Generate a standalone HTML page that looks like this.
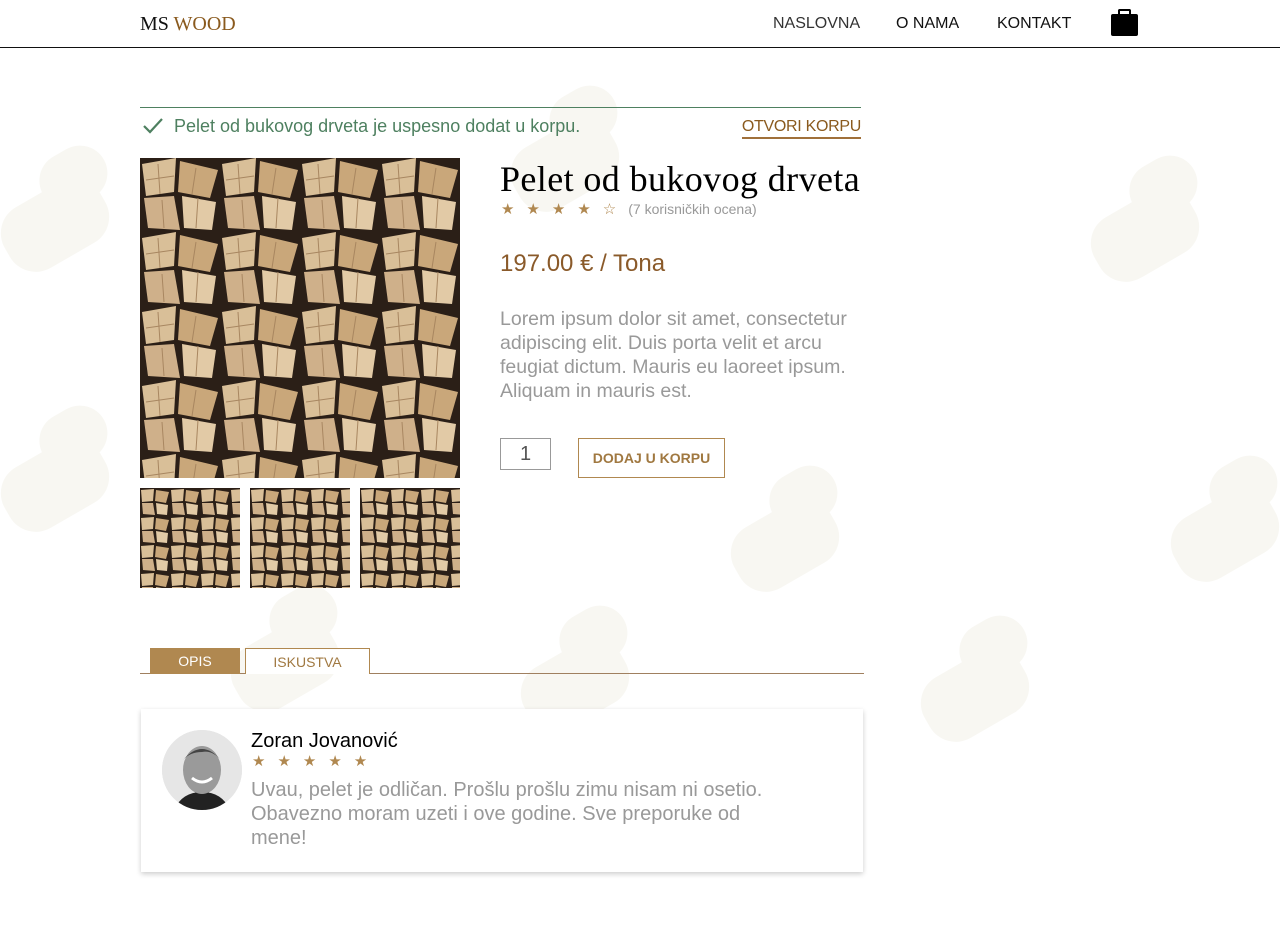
<!DOCTYPE html>
<html><head><meta charset="utf-8">
<style>
*{margin:0;padding:0;box-sizing:border-box}
body{width:1280px;height:950px;background:#fff;font-family:"Liberation Sans",sans-serif;position:relative;overflow:hidden}
.log{position:absolute;width:110px;height:70px;background:#f8f7f2;border-radius:30px;transform:rotate(-30deg)}
.log:after{content:"";position:absolute;left:60px;top:-25px;width:70px;height:55px;background:#f8f7f2;border-radius:28px}
header{position:absolute;left:0;top:0;width:1280px;height:48px;border-bottom:1.5px solid #111;background:#fff}
.logo{position:absolute;left:140px;top:13px;font-family:"Liberation Serif",serif;font-size:20px;color:#111}
.logo span{color:#8a5a1e}
nav a{position:absolute;top:15px;font-size:16px;color:#111;text-decoration:none}
.bag{position:absolute;left:1111px;top:14px;width:27px;height:22px;background:#000;border-radius:2px}
.bag:before{content:"";position:absolute;left:7px;top:-5px;width:9px;height:6px;border:2.5px solid #000;border-bottom:none;border-radius:2px 2px 0 0}
.msg{position:absolute;left:140px;top:107px;width:721px;border-top:1px solid #4e8060}
.msg .t{position:absolute;left:34px;top:8px;font-size:18px;color:#4e8060}
.msg .ck{position:absolute;left:2px;top:8px}
.msg .o{position:absolute;right:0;top:10px;font-size:16px;color:#8a5a1e;border-bottom:2px solid #a0703a;padding-bottom:1px;letter-spacing:-0.3px}
.wood{position:absolute;background:#2a1e16}
h1{position:absolute;left:500px;top:158px;font-family:"Liberation Serif",serif;font-weight:normal;font-size:36px;letter-spacing:0.4px;color:#000}
.stars{position:absolute;color:#b08850;font-size:15px;letter-spacing:12px}
.rc{font-size:14px;color:#999;letter-spacing:0}
.price{position:absolute;left:500px;top:250px;font-size:24px;color:#8a5a2a}
.desc{position:absolute;left:500px;top:307px;width:370px;font-size:19.5px;line-height:24px;color:#999}
.qty{position:absolute;left:500px;top:438px;width:51px;height:32px;border:1px solid #999;font-size:20px;color:#555;text-align:center;line-height:30px}
.add{position:absolute;left:578px;top:438px;width:147px;height:40px;border:1px solid #b08850;color:#a07840;font-size:14px;font-weight:bold;text-align:center;line-height:38px}
.tabs{position:absolute;left:140px;top:673px;width:724px;border-top:1px solid #a08060}
.tab1{position:absolute;left:150px;top:648px;width:90px;height:26px;background:#b08850;color:#fff;font-size:14px;text-align:center;line-height:26px}
.tab2{position:absolute;left:245px;top:648px;width:125px;height:26px;background:#fff;border:1px solid #b08850;border-bottom:none;color:#a07840;font-size:14px;text-align:center;line-height:26px}
.card{position:absolute;left:141px;top:709px;width:722px;height:163px;background:#fff;box-shadow:0 2px 5px rgba(0,0,0,.2)}
.av{position:absolute;left:21px;top:21px;width:80px;height:80px;border-radius:50%;background:#e5e5e5;overflow:hidden}
.nm{position:absolute;left:110px;top:21px;font-size:20px;color:#000}
.rv{position:absolute;left:110px;top:69px;width:530px;font-size:20px;line-height:24px;color:#999}
</style></head><body>
<div class="log" style="left:0;top:190px"></div>
<div class="log" style="left:1090px;top:200px"></div>
<div class="log" style="left:0;top:450px"></div>
<div class="log" style="left:730px;top:510px"></div>
<div class="log" style="left:1170px;top:500px"></div>
<div class="log" style="left:520px;top:650px"></div>
<div class="log" style="left:920px;top:660px"></div>
<div class="log" style="left:230px;top:630px"></div>
<div class="log" style="left:510px;top:130px"></div>

<svg width="0" height="0" style="position:absolute"><defs>
<pattern id="w" width="80" height="74" patternUnits="userSpaceOnUse">
<rect width="80" height="74" fill="#2b1f17"/>
<path d="M2 6 L36 0 L34 34 L6 38Z" fill="#d9bf98"/>
<path d="M40 3 L78 12 L70 40 L38 34Z" fill="#c9a77a"/>
<path d="M4 40 L34 38 L40 72 L8 70Z" fill="#cfb08a"/>
<path d="M42 38 L76 44 L72 72 L44 70Z" fill="#e2caa6"/>
<path d="M18 6 L20 36 M6 22 L34 18 M56 10 L52 36 M22 42 L24 70 M58 40 L56 70" stroke="#a88660" stroke-width="1" fill="none"/>
</pattern>
<pattern id="w2" width="30" height="28" patternUnits="userSpaceOnUse">
<rect width="30" height="28" fill="#2b1f17"/>
<path d="M1 2 L14 1 L13 13 L2 14Z" fill="#d9bf98"/>
<path d="M16 2 L29 4 L26 15 L15 13Z" fill="#c9a77a"/>
<path d="M2 15 L13 15 L15 27 L3 26Z" fill="#cfb08a"/>
<path d="M16 15 L28 17 L27 27 L17 26Z" fill="#e2caa6"/>
</pattern></defs></svg>

<header>
<div class="logo">MS <span>WOOD</span></div>
<nav><a style="left:773px;color:#333">NASLOVNA</a><a style="left:896px">O NAMA</a><a style="left:997px">KONTAKT</a></nav>
<div class="bag"></div>
</header>

<div class="msg">
<svg class="ck" width="22" height="20" viewBox="0 0 22 20"><path d="M2 10 L8 16 L20 3" fill="none" stroke="#4e8060" stroke-width="2.2"/></svg>
<div class="t">Pelet od bukovog drveta je uspesno dodat u korpu.</div>
<div class="o">OTVORI KORPU</div>
</div>

<svg class="wood" style="left:140px;top:158px" width="320" height="320"><rect width="320" height="320" fill="url(#w)"/></svg>
<svg class="wood" style="left:140px;top:488px" width="100" height="100"><rect width="100" height="100" fill="url(#w2)"/></svg>
<svg class="wood" style="left:250px;top:488px" width="100" height="100"><rect width="100" height="100" fill="url(#w2)"/></svg>
<svg class="wood" style="left:360px;top:488px" width="100" height="100"><rect width="100" height="100" fill="url(#w2)"/></svg>

<h1>Pelet od bukovog drveta</h1>
<div class="stars" style="left:501px;top:200px">★★★★☆<span class="rc">(7 korisničkih ocena)</span></div>
<div class="price">197.00 € / Tona</div>
<div class="desc">Lorem ipsum dolor sit amet, consectetur adipiscing elit. Duis porta velit et arcu feugiat dictum. Mauris eu laoreet ipsum. Aliquam in mauris est.</div>
<div class="qty">1</div>
<div class="add">DODAJ U KORPU</div>

<div class="tabs"></div>
<div class="tab1">OPIS</div>
<div class="tab2">ISKUSTVA</div>

<div class="card">
<div class="av"><svg width="80" height="80"><rect width="80" height="80" fill="#e6e6e6"/><path d="M12 80 Q20 62 40 62 Q60 62 68 80Z" fill="#222"/><ellipse cx="40" cy="40" rx="19" ry="24" fill="#9a9a9a"/><path d="M21 30 Q40 8 59 30 Q50 20 40 22 Q28 22 21 30Z" fill="#444"/><path d="M30 48 Q40 56 50 48" stroke="#fff" stroke-width="3" fill="none"/></svg></div>
<div class="nm">Zoran Jovanović</div>
<div class="stars" style="left:111px;top:43px">★★★★★</div>
<div class="rv">Uvau, pelet je odličan. Prošlu prošlu zimu nisam ni osetio. Obavezno moram uzeti i ove godine. Sve preporuke od mene!</div>
</div>
</body></html>
